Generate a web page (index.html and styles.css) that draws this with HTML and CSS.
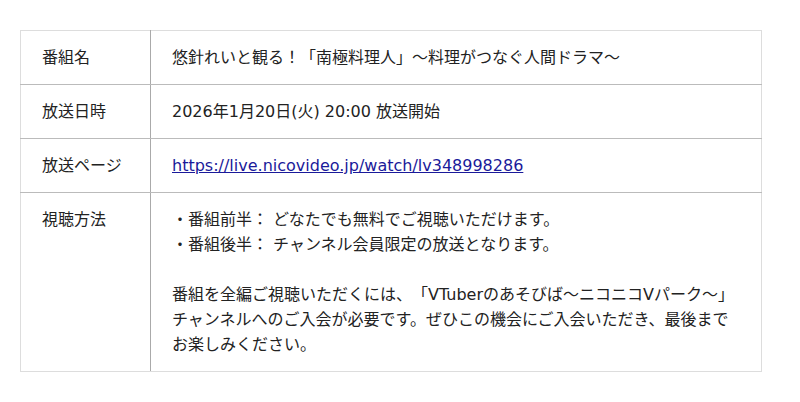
FILE: index.html
```html
<!DOCTYPE html>
<html lang="ja">
<head>
  <meta charset="UTF-8">
  <meta name="viewport" content="width=device-width, initial-scale=1.0">
  <title>番組情報</title>
  <link rel="stylesheet" href="styles.css">
</head>
<body>
  <table class="info">
    <tr>
      <th>番組名</th>
      <td>悠針れいと観る！「南極料理人」〜料理がつなぐ人間ドラマ〜</td>
    </tr>
    <tr>
      <th>放送日時</th>
      <td>2026年1月20日(火) 20:00 放送開始</td>
    </tr>
    <tr>
      <th>放送ページ</th>
      <td><a href="#">https://live.nicovideo.jp/watch/lv348998286</a></td>
    </tr>
    <tr>
      <th>視聴方法</th>
      <td>
        ・番組前半： どなたでも無料でご視聴いただけます。<br>
        ・番組後半： チャンネル会員限定の放送となります。<br>
        <br>
        番組を全編ご視聴いただくには、「VTuberのあそびば〜ニコニコVパーク〜」<br>
        チャンネルへのご入会が必要です。ぜひこの機会にご入会いただき、最後まで<br>
        お楽しみください。
      </td>
    </tr>
  </table>
</body>
</html>
```

FILE: styles.css
```css
body {
  margin: 0;
  padding: 30px 20px;
  background: #fff;
  font-family: "DejaVu Sans", "Noto Sans CJK JP", sans-serif;
  font-size: 16px;
  color: #222;
  text-spacing-trim: space-all;
}
.info {
  width: 742px;
  border-collapse: collapse;
  border: 1px solid #ddd;
}
.info th,
.info td {
  text-align: left;
  vertical-align: top;
  font-weight: normal;
  line-height: 25px;
  padding: 14px 20px 14px 21px;
  border-bottom: 1px solid #bbb;
}
.info tr:last-child th,
.info tr:last-child td {
  border-bottom: 1px solid #ddd;
}
.info th {
  width: 88px;
  border-right: 1px solid #aaa;
}
.info a {
  color: #1a1a9a;
}
```
